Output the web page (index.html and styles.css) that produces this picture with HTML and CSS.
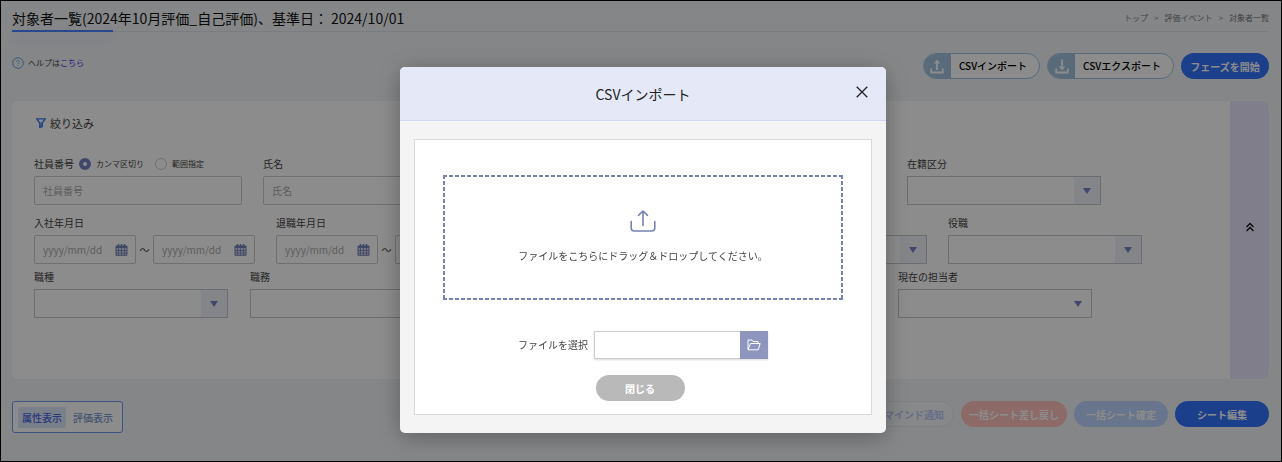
FILE: index.html
```html
<!DOCTYPE html>
<html lang="ja">

<head>
    <meta charset="UTF-8">
    <meta name="viewport" content="width=device-width, initial-scale=1.0">
    <title>対象者一覧</title>
    <link rel="stylesheet" href="styles.css">
</head>

<body>

    <!-- shared icons -->
    <svg class="sprite" aria-hidden="true">
        <symbol id="calendar" viewBox="0 0 13 12">
            <path d="M1 2h11v9.300H1z" fill="#d5daec" stroke="#7682b4" />
            <path d="M1 3h11" stroke="#7682b4" stroke-width="2" />
            <path d="M3.500 0v3M6.500 0v3M9.500 0v3" stroke="#7682b4" stroke-width="1.500" />
            <path d="M1 6.500h11M1 9h11M3.500 4v7M6.500 4v7M9.500 4v7" stroke="#7682b4" stroke-width=".8" />
        </symbol>
    </svg>

    <div class="page">
        <header class="page-header">
            <h1>対象者一覧(2024年10月評価_自己評価)、基準日： 2024/10/01</h1>
            <nav class="breadcrumb">
                <span>トップ</span><span>&gt;</span><span>評価イベント</span><span>&gt;</span><span>対象者一覧</span>
            </nav>
        </header>

        <div class="toolbar">
            <p class="help">
                <svg width="12" height="12" viewBox="0 0 12 12" fill="none" stroke="#6fa3dc">
                    <circle cx="6" cy="6" r="5.300" />
                    <path d="M4.600 4.800C4.600 2.800 7.500 3 7.400 4.700C7.400 5.700 6 5.700 6 7M6 8v1" stroke-width=".8" />
                </svg>
                <span>ヘルプは<a href="#">こちら</a></span>
            </p>
            <div class="actions">
                <button class="csv-button" type="button">
                    <span class="csv-icon">
                        <svg width="14" height="15" viewBox="0 0 14 15" fill="none" stroke="#fff" stroke-width="1.800">
                            <path d="M1.200 9.500v4h11.600v-4M7 11V3" />
                            <path d="M7 .5l3.200 4H3.800z" fill="#fff" stroke="none" />
                        </svg>
                    </span>
                    <span class="csv-text">CSVインポート</span>
                </button>
                <button class="csv-button" type="button">
                    <span class="csv-icon">
                        <svg width="14" height="15" viewBox="0 0 14 15" fill="none" stroke="#fff" stroke-width="1.800">
                            <path d="M1.200 9.500v4h11.600v-4M7 .5v8" />
                            <path d="M7 11.500l3.200-4H3.800z" fill="#fff" stroke="none" />
                        </svg>
                    </span>
                    <span class="csv-text">CSVエクスポート</span>
                </button>
                <button class="pill blue phase" type="button">フェーズを開始</button>
            </div>
        </div>

        <section class="filter">
            <div class="filter-body">
                <h2>
                    <svg width="10" height="10" viewBox="0 0 10 10" fill="none" stroke="#3c78f0" stroke-width="1.300">
                        <path d="M.8.900h8.400L6.300 4.800v4L3.700 9.400V4.800z" />
                        <path d="M5 4.500v4.500" />
                    </svg>
                    絞り込み
                </h2>

                <div class="row first">
                    <div class="field">
                        <div class="label-line">
                            <label for="emp-no">社員番号</label>
                            <label class="radio"><input type="radio" name="emp-mode" checked>カンマ区切り</label>
                            <label class="radio"><input type="radio" name="emp-mode">範囲指定</label>
                        </div>
                        <input class="text" id="emp-no" type="text" placeholder="社員番号">
                    </div>
                    <div class="field">
                        <label for="emp-name">氏名</label>
                        <input class="text" id="emp-name" type="text" placeholder="氏名">
                    </div>
                    <div class="field no-label">
                        <span class="select"><select aria-label="所属"></select></span>
                    </div>
                    <div class="field no-label">
                        <input class="text short" type="text" aria-label="所属名">
                    </div>
                    <div class="field">
                        <label for="status">在籍区分</label>
                        <span class="select"><select id="status"></select></span>
                    </div>
                </div>

                <div class="row second">
                    <div class="field">
                        <label for="join-from">入社年月日</label>
                        <div class="range">
                            <span class="date"><input class="text" id="join-from" type="text" placeholder="yyyy/mm/dd"><svg><use href="#calendar" /></svg></span>
                            <span class="tilde">～</span>
                            <span class="date"><input class="text" type="text" placeholder="yyyy/mm/dd" aria-label="入社年月日 終了"><svg><use href="#calendar" /></svg></span>
                        </div>
                    </div>
                    <div class="field">
                        <label for="leave-from">退職年月日</label>
                        <div class="range">
                            <span class="date"><input class="text" id="leave-from" type="text" placeholder="yyyy/mm/dd"><svg><use href="#calendar" /></svg></span>
                            <span class="tilde">～</span>
                            <span class="date"><input class="text" type="text" aria-label="退職年月日 終了"></span>
                        </div>
                    </div>
                    <div class="field no-label">
                        <span class="select"><select aria-label="等級"></select></span>
                    </div>
                    <div class="field no-label">
                        <span class="select"><select aria-label="資格"></select></span>
                    </div>
                    <div class="field">
                        <label for="post">役職</label>
                        <span class="select"><select id="post"></select></span>
                    </div>
                </div>

                <div class="row third">
                    <div class="field">
                        <label for="job">職種</label>
                        <span class="select"><select id="job"></select></span>
                    </div>
                    <div class="field">
                        <label for="duty">職務</label>
                        <span class="select"><select id="duty"></select></span>
                    </div>
                    <div class="field no-label">
                        <span class="select"><select aria-label="状態"></select></span>
                    </div>
                    <div class="field no-label">
                        <span class="select"><select aria-label="フェーズ"></select></span>
                    </div>
                    <div class="field">
                        <label for="owner">現在の担当者</label>
                        <span class="select plain"><select id="owner"></select></span>
                    </div>
                </div>
            </div>
            <button class="collapse" type="button" aria-label="閉じる">
                <svg width="10" height="10" viewBox="0 0 10 10" fill="none" stroke="#111" stroke-width="1.300">
                    <path d="M1.500 5L5 1.500L8.500 5M1.500 9L5 5.500L8.500 9" />
                </svg>
            </button>
        </section>

        <div class="footer-bar">
            <div class="tabs">
                <button class="tab active" type="button">属性表示</button>
                <button class="tab" type="button">評価表示</button>
            </div>
            <div class="actions">
                <button class="pill outline" type="button">リマインド通知</button>
                <button class="pill pink" type="button">一括シート差し戻し</button>
                <button class="pill pale" type="button">一括シート確定</button>
                <button class="pill blue" type="button">シート編集</button>
            </div>
        </div>
    </div>

    <div class="overlay">
        <div class="modal" role="dialog" aria-labelledby="modal-title">
            <div class="modal-header">
                <h2 id="modal-title">CSVインポート</h2>
                <button class="modal-close" type="button" aria-label="閉じる">
                    <svg width="12" height="12" viewBox="0 0 12 12" stroke="#222" stroke-width="1.300">
                        <path d="M.7.700l10.600 10.600M11.300.700L.7 11.300" />
                    </svg>
                </button>
            </div>
            <div class="modal-body">
                <div class="modal-box">
                    <div class="dropzone">
                        <svg width="26" height="22" viewBox="0 0 26 22" fill="none" stroke="#7682b4" stroke-width="1.600" stroke-linecap="round" stroke-linejoin="round">
                            <path d="M1.200 11.500v6.500q0 3 3 3h17.600q3 0 3-3v-6.500" />
                            <path d="M13 15.500V1.200M8.500 5.300L13 1L17.500 5.300" />
                        </svg>
                        <p>ファイルをこちらにドラッグ＆ドロップしてください。</p>
                    </div>
                    <div class="modal-form">
                        <div class="file-row">
                            <label for="file-name">ファイルを選択</label>
                            <div class="file-input">
                                <input id="file-name" type="text">
                                <button type="button" aria-label="参照">
                                    <svg width="14" height="12" viewBox="0 0 14 12" fill="none" stroke="#fff" stroke-linejoin="round">
                                        <path d="M1 10.500V1h4l1 1.500h5v2M1 10.800L3.500 4.500h9.700l-2 6.300z" />
                                    </svg>
                                </button>
                            </div>
                        </div>
                        <button class="pill grey" type="button">閉じる</button>
                    </div>
                </div>
            </div>
        </div>
    </div>

</body>

</html>
```
FILE: styles.css
```css
* {
    box-sizing: border-box;
}

body {
    margin: 0;
    font-family: "Noto Sans CJK JP", sans-serif;
    font-size: 10px;
    line-height: 16px;
    color: #444;
}

h1,
h2,
p {
    margin: 0;
    font-weight: normal;
}

button,
input,
select {
    font-family: inherit;
    font-size: 10px;
    padding: 0;
    border: 0;
}

svg {
    display: block;
    flex: none;
}

.sprite {
    position: absolute;
    width: 0;
    height: 0;
}

.page {
    min-height: 100vh;
    padding: 0 12px 28px 11px;
    border: 1px solid #000;
    background: #f3f5f8;
    overflow: hidden;
}

/* header */
.page-header {
    position: relative;
    display: flex;
    justify-content: space-between;
    align-items: center;
    height: 31px;
    padding-top: 4px;
    border-bottom: 1px solid #dfe3ea;
}

.page-header::after {
    content: "";
    position: absolute;
    left: 0;
    bottom: -1px;
    width: 101px;
    height: 2px;
    background: #4a84ff;
    box-shadow: 0 6px 12px rgba(51, 84, 255, 0.25);
}

h1 {
    font-size: 14px;
    line-height: 24px;
    color: #111;
    white-space: nowrap;
}

.breadcrumb {
    display: flex;
    gap: 6px;
    font-size: 8px;
    color: #777;
    white-space: nowrap;
}

.toolbar {
    display: flex;
    justify-content: space-between;
    padding: 21px 0 22px;
}

.help {
    display: flex;
    align-items: center;
    gap: 4px;
    height: 20px;
    font-size: 8px;
}

.help a {
    color: #3c32e6;
    text-decoration: none;
}

.actions {
    display: flex;
    gap: 7px;
}

.csv-button {
    display: flex;
    height: 26px;
    border: 1px solid #a2c3e1;
    border-radius: 13px;
    background: #fff;
    overflow: hidden;
}

.csv-icon {
    display: flex;
    align-items: center;
    justify-content: center;
    width: 27px;
    height: 24px;
    background: #a2c3e1;
}

.csv-text {
    padding: 0 12px 0 8px;
    line-height: 24px;
    font-weight: 500;
    color: #000;
}

.pill {
    min-width: 94px;
    height: 26px;
    padding: 0 8px;
    border-radius: 13px;
    font-weight: bold;
    color: #fff;
    white-space: nowrap;
}

.phase {
    min-width: 88px;
}

.blue {
    background: #3374ff;
}

.pink {
    background: #ffc2be;
}

.pale {
    background: #bfd5ff;
}

.outline {
    min-width: 90px;
    border: 1px solid #e6e9f2;
    background: #f5f7fa;
    color: #bac8f5;
}

.grey {
    min-width: 89px;
    margin-right: 6px;
    background: #b9b9b9;
}

/* search conditions */
.filter {
    display: flex;
    height: 278px;
    border-radius: 6px;
    background: #fff;
    overflow: hidden;
}

.filter-body {
    flex: 1;
    min-width: 0;
    padding: 14px 0 0 22px;
}

.filter h2 {
    display: flex;
    align-items: center;
    gap: 4px;
    padding-left: 2px;
    font-size: 11px;
}

.row {
    display: flex;
    align-items: flex-end;
    gap: 21px;
}

.first {
    margin-top: 25px;
}

.second {
    margin-top: 10px;
}

.third {
    gap: 22px;
    margin-top: 5px;
}

.field {
    flex: none;
}

.field > label {
    display: block;
    margin-bottom: 4px;
}

.label-line {
    display: flex;
    align-items: center;
    gap: 5px;
    margin-bottom: 4px;
}

.radio {
    display: flex;
    align-items: center;
    gap: 5px;
    margin-right: 6px;
    font-size: 8px;
}

.radio input {
    width: 12px;
    height: 12px;
    margin: 0;
    border: 1px solid #ccc;
    border-radius: 50%;
    appearance: none;
}

.radio input:checked {
    border: 4px solid #7682c4;
    background: #fff;
}

.text {
    display: block;
    width: 208px;
    height: 29px;
    padding: 0 8px;
    border: 1px solid #ccc;
    border-radius: 2px;
    background: #fff;
}

.short {
    width: 179px;
}

.text::placeholder {
    color: #aaa;
}

.range,
.date {
    display: flex;
    align-items: center;
}

.date {
    position: relative;
}

.date .text {
    width: 102px;
}

.date svg {
    position: absolute;
    right: 8px;
    width: 13px;
    height: 12px;
}

.tilde {
    width: 17px;
    text-align: center;
}

.select {
    position: relative;
    display: block;
    width: 194px;
}

.select select {
    display: block;
    width: 100%;
    height: 29px;
    border: 1px solid #c4c6cc;
    border-radius: 0;
    background: linear-gradient(#eff3fa, #eff3fa) right / 26px 100% no-repeat #fff;
    appearance: none;
}

.select.plain select {
    background: #fff;
}

.select::after {
    content: "";
    position: absolute;
    top: 12px;
    right: 10px;
    border: 4px solid transparent;
    border-top: 6px solid #7682c4;
    border-bottom: 0;
}

.collapse {
    display: flex;
    align-items: center;
    justify-content: center;
    width: 39px;
    padding-top: 26px;
    padding-bottom: 52px;
    background: #e8e6fb;
}

/* footer */
.footer-bar {
    display: flex;
    justify-content: space-between;
    align-items: flex-start;
    padding-top: 22px;
}

.tabs {
    display: flex;
    align-items: center;
    gap: 3px;
    height: 32px;
    padding: 0 5px;
    border: 1px solid #6e98f0;
    border-radius: 3px;
    background: #fff;
}

.tab {
    height: 21px;
    padding: 0 4px;
    border-radius: 2px;
    background: none;
    font-weight: 500;
    color: #7b99cc;
}

.active {
    background: #dfe9fb;
    color: #4b66e0;
}

/* modal */
.overlay {
    position: fixed;
    inset: 0;
    display: flex;
    justify-content: center;
    align-items: flex-start;
    padding: 67px 0 0 4px;
    background: rgba(0, 0, 0, 0.45);
}

.modal {
    width: 486px;
    max-width: 100%;
    border-radius: 5px;
    background: #f4f4f4;
    box-shadow: 0 4px 24px rgba(0, 0, 0, 0.3);
    overflow: hidden;
}

.modal-header {
    position: relative;
    height: 54px;
    border-bottom: 1px solid #cfd8f0;
    background: #e4e8f7;
}

.modal-header h2 {
    font-size: 14px;
    line-height: 54px;
    text-align: center;
    color: #222;
}

.modal-close {
    position: absolute;
    top: 19px;
    right: 18px;
    background: none;
}

.modal-body {
    padding: 18px 14px;
}

.modal-box {
    padding: 35px 28px 13px;
    border: 1px solid #d9d9d9;
    background: #fff;
}

/* dashes are drawn with gradients to keep them 4px on, 2px off */
.dropzone {
    --h: repeating-linear-gradient(90deg, #7682b4 0 4px, transparent 4px 6px);
    --v: repeating-linear-gradient(#7682b4 0 4px, transparent 4px 6px);
    display: flex;
    flex-direction: column;
    align-items: center;
    gap: 16px;
    height: 125px;
    padding-top: 35px;
    background: var(--h) top / 100% 2px no-repeat, var(--h) bottom / 100% 2px no-repeat, var(--v) left / 2px 100% no-repeat, var(--v) right / 2px 100% no-repeat;
}

.modal-form {
    display: flex;
    flex-direction: column;
    align-items: center;
}

.file-row {
    display: flex;
    align-items: center;
    gap: 6px;
    margin: 31px 0 16px;
}

.file-input {
    display: flex;
    box-shadow: 0 1px 2px rgba(0, 0, 0, 0.15);
}

.file-input input {
    width: 146px;
    height: 28px;
    border: 1px solid #ccc;
    border-right: 0;
}

.file-input button {
    display: flex;
    align-items: center;
    justify-content: center;
    width: 28px;
    height: 28px;
    background: #8e96bf;
}
```
